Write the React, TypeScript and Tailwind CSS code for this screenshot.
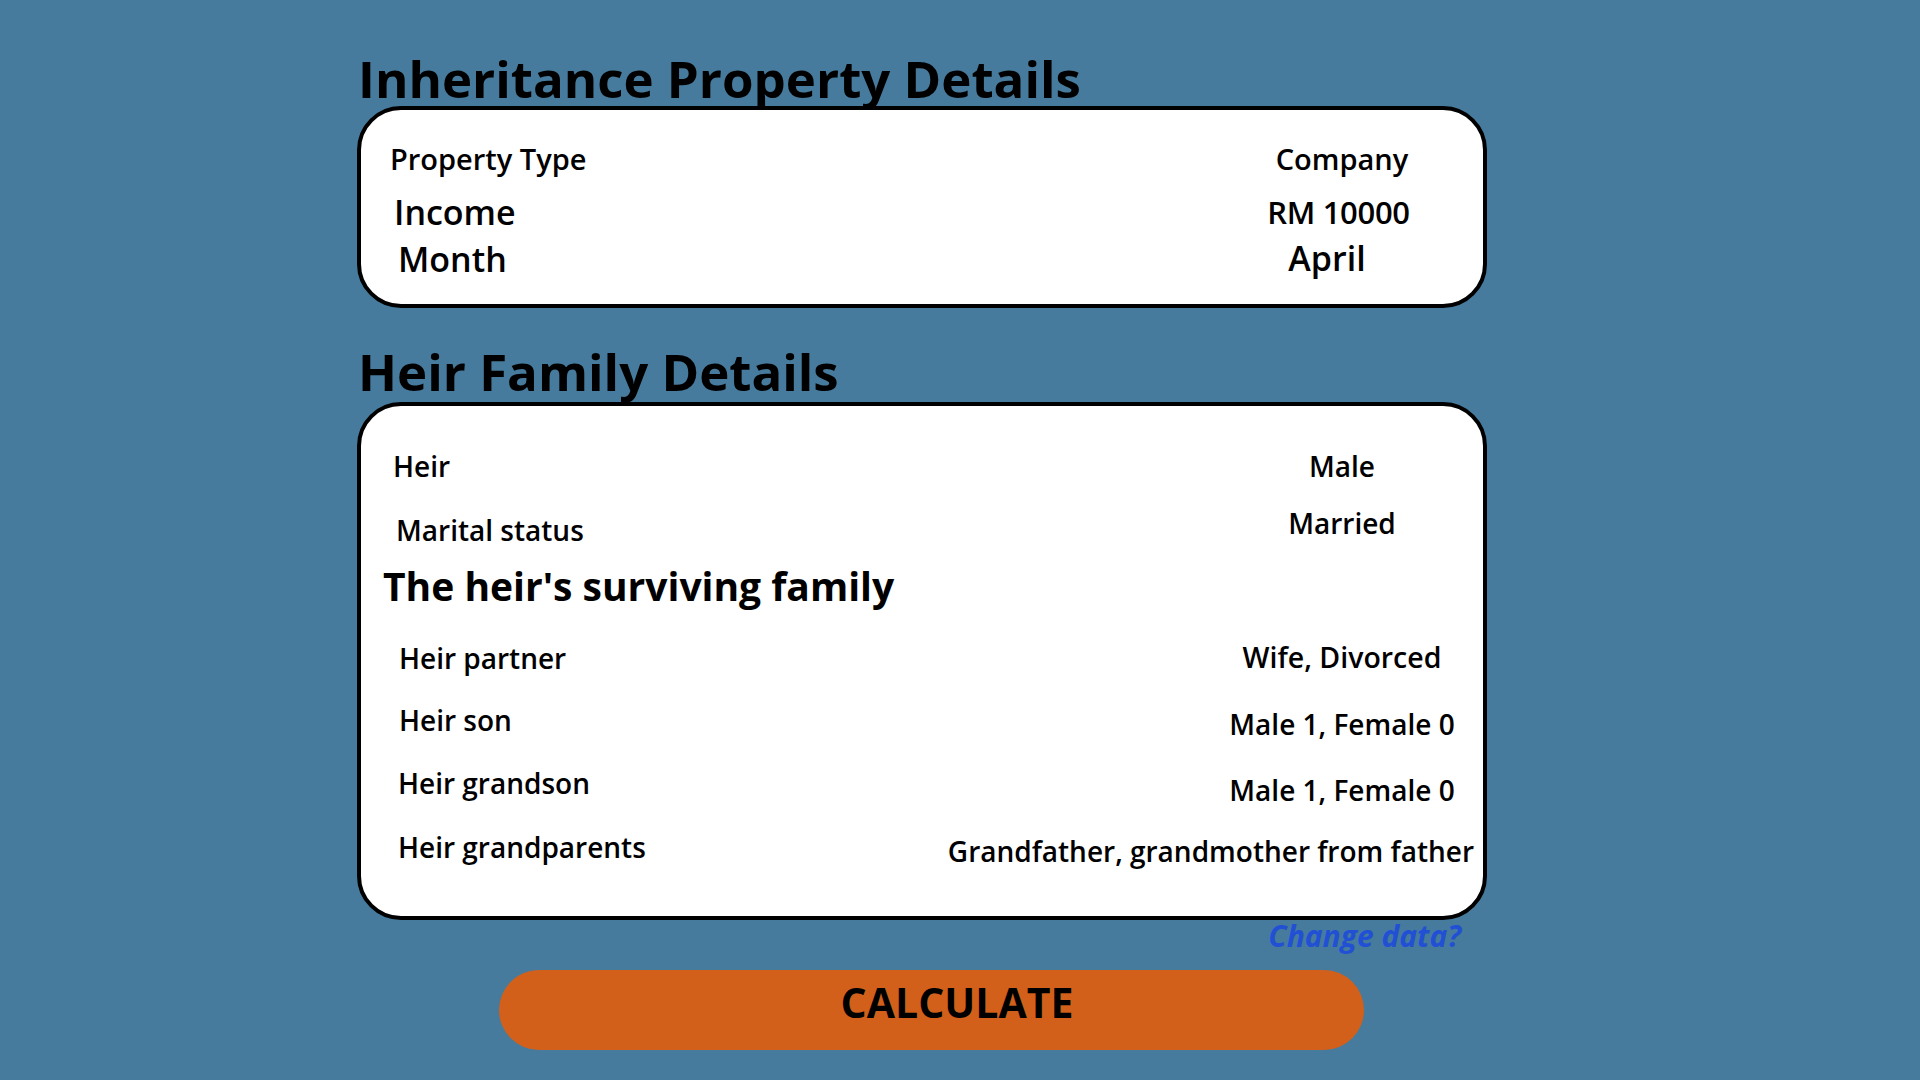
import React from "react";

export default function App() {
  return (
    <div className="min-h-screen w-full bg-[#467b9d] font-['Open_Sans',sans-serif] text-black overflow-hidden">
      <div className="w-[1130px] ml-[357px] pt-[53px] pb-[31px] flex flex-col">
        <h1 className="text-[51px] font-bold leading-none ml-[1px] whitespace-nowrap">Inheritance Property Details</h1>

        <div className="mt-[2px] h-[202px] rounded-[44px] border-[4px] border-black bg-white flex">
          <div className="flex-1 flex flex-col items-start">
            <div className="mt-[34px] ml-[29px] text-[29px] font-semibold leading-none">Property Type</div>
            <div className="mt-[22px] ml-[33px] text-[34px] font-semibold leading-none">Income</div>
            <div className="mt-[13px] ml-[37px] text-[34px] font-semibold leading-none">Month</div>
          </div>
          <div className="w-[282px] flex flex-col items-center">
            <div className="mt-[34px] text-[29px] font-semibold leading-none">Company</div>
            <div className="mt-[24px] ml-[-7px] text-[31px] font-semibold leading-none tracking-[-0.01em]">RM 10000</div>
            <div className="mt-[13px] ml-[-30px] text-[34px] font-semibold leading-none">April</div>
          </div>
        </div>

        <h2 className="mt-[38px] text-[51px] font-bold leading-none ml-[1px] whitespace-nowrap">Heir Family Details</h2>

        <div className="mt-[5px] h-[518px] rounded-[44px] border-[4px] border-black bg-white flex">
          <div className="flex-1 flex flex-col items-start">
            <div className="mt-[46px] ml-[32px] text-[28px] font-semibold leading-none">Heir</div>
            <div className="mt-[36px] ml-[35px] text-[28px] font-semibold leading-none">Marital status</div>
            <div className="mt-[22px] ml-[22px] text-[39px] font-bold leading-none whitespace-nowrap">The heir&apos;s surviving family</div>
            <div className="mt-[39px] ml-[38px] text-[28px] font-semibold leading-none">Heir partner</div>
            <div className="mt-[34px] ml-[38px] text-[28px] font-semibold leading-none">Heir son</div>
            <div className="mt-[35px] ml-[37px] text-[28px] font-semibold leading-none">Heir grandson</div>
            <div className="mt-[36px] ml-[37px] text-[28px] font-semibold leading-none">Heir grandparents</div>
          </div>
          <div className="w-[282px] flex flex-col items-center">
            <div className="mt-[46px] text-[28px] font-semibold leading-none">Male</div>
            <div className="mt-[29px] text-[28px] font-semibold leading-none">Married</div>
            <div className="mt-[106px] text-[28.5px] font-semibold leading-none whitespace-nowrap">Wife, Divorced</div>
            <div className="mt-[38px] text-[28px] font-semibold leading-none whitespace-nowrap">Male 1, Female 0</div>
            <div className="mt-[38px] text-[28px] font-semibold leading-none whitespace-nowrap">Male 1, Female 0</div>
            <div className="mt-[33px] self-end mr-[9px] text-[28px] font-semibold leading-none whitespace-nowrap">Grandfather, grandmother from father</div>
          </div>
        </div>

        <div className="mt-[1px] flex justify-end pr-[26px]">
          <span className="text-[30px] font-bold italic leading-none text-[#2150d4] cursor-pointer">Change data?</span>
        </div>

        <button className="mt-[19px] ml-[142px] w-[865px] h-[80px] rounded-full bg-[#d2601a] flex items-start justify-center pl-[51px] pt-[12px]">
          <span className="text-[41px] font-bold leading-none text-black">CALCULATE</span>
        </button>
      </div>
    </div>
  );
}
